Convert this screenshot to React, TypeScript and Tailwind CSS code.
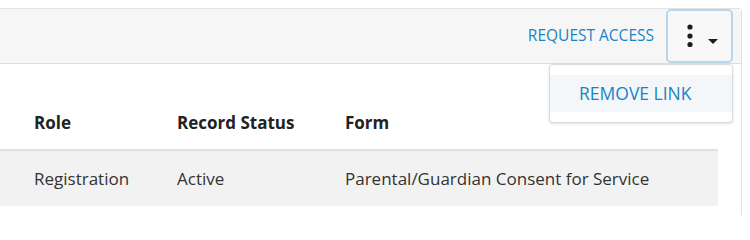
import { useState } from 'react';

const FONT = { fontFamily: '"Open Sans", "Noto Sans", Arial, sans-serif' };

function KebabCaret() {
  return (
    <svg width="40" height="30" viewBox="0 0 40 30" aria-hidden="true">
      <circle cx="8" cy="6" r="2.6" fill="#1c1c1c" />
      <circle cx="8" cy="15" r="2.6" fill="#1c1c1c" />
      <circle cx="8" cy="23.5" r="2.6" fill="#1c1c1c" />
      <path d="M26 18 L36 18 L31 23 Z" fill="#1c1c1c" />
    </svg>
  );
}

export default function App() {
  const [open] = useState(true);

  return (
    <div className="relative h-[215px] w-[750px] overflow-hidden bg-white pt-2" style={FONT}>
      <div className="w-[742px] rounded-tr border-t border-r border-[#e2e2e2] bg-white">
        {/* toolbar */}
        <div className="flex h-[55px] items-start justify-end border-b border-[#dedede] bg-[#f6f6f6] pr-2">
          <a href="#" className="mr-3 self-center text-[15.5px] text-[#1a83c6]">
            REQUEST ACCESS
          </a>
          <button
            type="button"
            className="flex h-[54px] w-[67px] items-center justify-center rounded-[5px] border-2 border-[#b7d7ec] bg-[#f8f8f8] pl-1"
          >
            <KebabCaret />
          </button>
        </div>

        {/* table */}
        <div className="h-[151px] pt-[33px]">
          <div className="grid w-[718px] grid-cols-[177px_168px_1fr] text-[17px] text-[#222]">
            <div className="flex h-[52px] items-center pl-[34px] font-bold">Role</div>
            <div className="flex h-[52px] items-center font-bold">Record Status</div>
            <div className="flex h-[52px] items-center font-bold">Form</div>
          </div>
          <div className="grid h-[57px] w-[718px] grid-cols-[177px_168px_1fr] border-t-2 border-[#e0e0e0] bg-[#f2f2f2] text-[17px] text-[#333]">
            <div className="flex items-center pl-[34px]">Registration</div>
            <div className="flex items-center">Active</div>
            <div className="flex items-center">Parental/Guardian Consent for Service</div>
          </div>
        </div>
      </div>

      {open && (
        <div className="absolute top-[64px] left-[549px] w-[184px] rounded border border-[#dadada] bg-white py-[10px] shadow-sm">
          <div className="flex h-[37px] items-center bg-[#f4f7fa] pl-[29px] text-[17.5px] text-[#1a83c6]">
            REMOVE LINK
          </div>
        </div>
      )}
    </div>
  );
}
